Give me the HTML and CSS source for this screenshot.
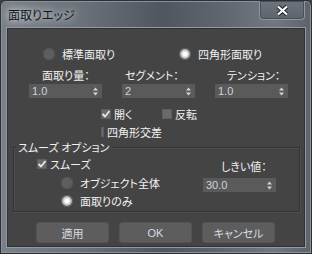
FILE: index.html
```html
<!DOCTYPE html>
<html lang="ja">
<head>
    <meta charset="UTF-8">
    <title>面取りエッジ</title>
    <link rel="stylesheet" href="styles.css">
</head>
<body>
<div class="window">
    <div class="titlebar">
        <span class="title">面取りエッジ</span>
        <div class="close">
            <svg width="13" height="11" viewBox="0 0 13 11"><path d="M2 1.5 L11 9.5 M11 1.5 L2 9.5" stroke="#1c1f22" stroke-width="4"/><path d="M2 1.5 L11 9.5 M11 1.5 L2 9.5" stroke="#fff" stroke-width="2.2"/></svg>
        </div>
    </div>
    <div class="client">
        <div class="mode-row">
            <label class="opt first"><span class="radio"></span>標準面取り</label>
            <label class="opt"><span class="radio on"></span>四角形面取り</label>
        </div>

        <div class="field-labels">
            <span class="lbl l1">面取り量：</span>
            <span class="lbl l2">セグメント：</span>
            <span class="lbl l3">テンション：</span>
        </div>
        <div class="spinners">
            <div class="spinner"><span>1.0</span><svg width="5" height="9" viewBox="0 0 5 9"><path d="M0 3.5 L2.5 0.5 L5 3.5 Z M0 5.5 L2.5 8.5 L5 5.5 Z" fill="#d4d4d4"/></svg></div>
            <div class="spinner"><span>2</span><svg width="5" height="9" viewBox="0 0 5 9"><path d="M0 3.5 L2.5 0.5 L5 3.5 Z M0 5.5 L2.5 8.5 L5 5.5 Z" fill="#d4d4d4"/></svg></div>
            <div class="spinner"><span>1.0</span><svg width="5" height="9" viewBox="0 0 5 9"><path d="M0 3.5 L2.5 0.5 L5 3.5 Z M0 5.5 L2.5 8.5 L5 5.5 Z" fill="#d4d4d4"/></svg></div>
        </div>

        <div class="check-row">
            <label class="opt check-first"><span class="check on"><svg width="10" height="10" viewBox="0 0 10 10"><path d="M1.5 5 L4 7.5 L8.5 2" stroke="#e8e8e8" stroke-width="1.8" fill="none"/></svg></span>開く</label>
            <label class="opt"><span class="check"></span>反転</label>
        </div>
        <div class="check-row second">
            <label class="opt check-first"><span class="check"></span>四角形交差</label>
        </div>

        <fieldset class="group">
            <legend>スムーズ オプション</legend>
            <div class="group-body">
                <div class="group-left">
                    <label class="opt smooth"><span class="check on"><svg width="10" height="10" viewBox="0 0 10 10"><path d="M1.5 5 L4 7.5 L8.5 2" stroke="#e8e8e8" stroke-width="1.8" fill="none"/></svg></span>スムーズ</label>
                    <label class="opt sub r1"><span class="radio"></span>オブジェクト全体</label>
                    <label class="opt sub r2"><span class="radio on"></span>面取りのみ</label>
                </div>
                <div class="group-right">
                    <span class="lbl threshold">しきい値：</span>
                    <div class="spinner"><span>30.0</span><svg width="5" height="9" viewBox="0 0 5 9"><path d="M0 3.5 L2.5 0.5 L5 3.5 Z M0 5.5 L2.5 8.5 L5 5.5 Z" fill="#d4d4d4"/></svg></div>
                </div>
            </div>
        </fieldset>

        <div class="buttons">
            <button class="btn">適用</button>
            <button class="btn">OK</button>
            <button class="btn">キャンセル</button>
        </div>
    </div>
</div>
</body>
</html>
```
FILE: styles.css
```css
body {
    margin: 0;
    font-family: "Noto Sans CJK JP", sans-serif;
    font-size: 11px;
    font-feature-settings: "palt";
    background: #3b4047;
}

.window {
    width: 312px;
    height: 254px;
    box-sizing: border-box;
    border: 1px solid #2b3036;
    border-radius: 6px 6px 0 0;
    padding: 0 6px 6px;
    background: linear-gradient(90deg, #7b8188 0%, #6c7279 25%, #4f565e 52%, #5e656d 70%, #727880 88%, #5d636a 100%);
    box-shadow: inset 0 0 0 1px #8a9199;
}

.titlebar {
    height: 27px;
    display: flex;
    justify-content: space-between;
    align-items: flex-start;
}

.title {
    font-size: 12px;
    color: #15181b;
    padding: 5px 0 0 1px;
    text-shadow: 0 0 6px #d8dde2, 0 0 10px #c6ccd2;
}

.close {
    width: 46px;
    height: 19px;
    box-sizing: border-box;
    border: 1px solid #8f969e;
    border-top: none;
    border-radius: 0 0 4px 4px;
    background: linear-gradient(#6c737b, #5d646c);
    box-shadow: inset 0 0 0 1px #4a5057;
    display: flex;
    justify-content: center;
    align-items: center;
}

.client {
    height: 219px;
    box-sizing: border-box;
    background: #444444;
    border: 1px solid #2f3235;
    box-shadow: 0 0 0 1px #939aa2;
    color: #f2f2f2;
}

.opt {
    display: flex;
    align-items: center;
    gap: 3px;
    height: 12px;
    white-space: nowrap;
    flex-shrink: 0;
}

.radio {
    width: 12px;
    height: 12px;
    border-radius: 50%;
    background: #5e5e5e;
    box-shadow: inset 0 0 0 1px #555;
    margin-right: 4px;
}

.radio.on {
    background: radial-gradient(circle, #ffffff 0 2px, #d6d6d6 3px, #a8a8a8 5px, #8a8a8a 6px);
}

.check {
    width: 10px;
    height: 10px;
    background: #6a6a6a;
    box-shadow: inset 0 0 0 1px #5e5e5e;
    display: flex;
}

.mode-row {
    display: flex;
    margin-top: 18px;
    height: 14px;
    align-items: center;
}

.mode-row .first {
    width: 136px;
    padding-left: 35px;
}

.field-labels {
    display: grid;
    grid-template-columns: 73px 73px 73px;
    column-gap: 20px;
    padding-left: 21px;
    margin-top: 6px;
    height: 13px;
    align-items: center;
}

.lbl {
    white-space: nowrap;
}

.l1 {
    padding-left: 13px;
}

.l2 {
    padding-left: 3px;
}

.l3 {
    padding-left: 12px;
}

.spinners {
    display: flex;
    gap: 20px;
    margin-top: 4px;
    padding-left: 21px;
}

.spinner {
    width: 73px;
    height: 14px;
    box-sizing: border-box;
    background: #5a5a5a;
    display: flex;
    justify-content: space-between;
    align-items: center;
    padding: 0 4px 0 3px;
    font-family: "Liberation Sans", sans-serif;
    font-size: 11px;
    color: #ccd4dc;
}

.check-row {
    display: flex;
    margin-top: 10px;
}

.check-row.second {
    margin-top: 6px;
}

.check-first {
    width: 61px;
    padding-left: 93px;
}

.group {
    margin: 2px 0 0 5px;
    width: 287px;
    box-sizing: border-box;
    padding: 0 0 4px;
    border: 1px solid #353535;
    box-shadow: 1px 1px 0 #4e4e4e, inset 1px 1px 0 #4e4e4e;
}

.group legend {
    margin-left: 2px;
    padding: 0 2px;
    height: 14px;
    line-height: 14px;
}

.group-body {
    display: flex;
}

.group-left {
    width: 189px;
    padding-top: 4px;
}

.smooth {
    padding-left: 23px;
}

.sub {
    padding-left: 47px;
}

.r1 {
    margin-top: 7px;
}

.r2 {
    margin-top: 6px;
}

.group-right {
    padding-top: 5px;
}

.threshold {
    display: block;
    height: 14px;
    line-height: 14px;
    padding-left: 18px;
    margin-bottom: 5px;
}

.buttons {
    display: flex;
    gap: 10px;
    margin-top: 10px;
    padding-left: 28px;
}

.btn {
    width: 73px;
    height: 21px;
    background: #5d5d5d;
    border: 1px solid #545454;
    border-radius: 3px;
    color: #d8dce0;
    font-family: "Liberation Sans", "Noto Sans CJK JP", sans-serif;
    font-size: 11px;
    font-feature-settings: "palt";
    padding: 0;
}
```
